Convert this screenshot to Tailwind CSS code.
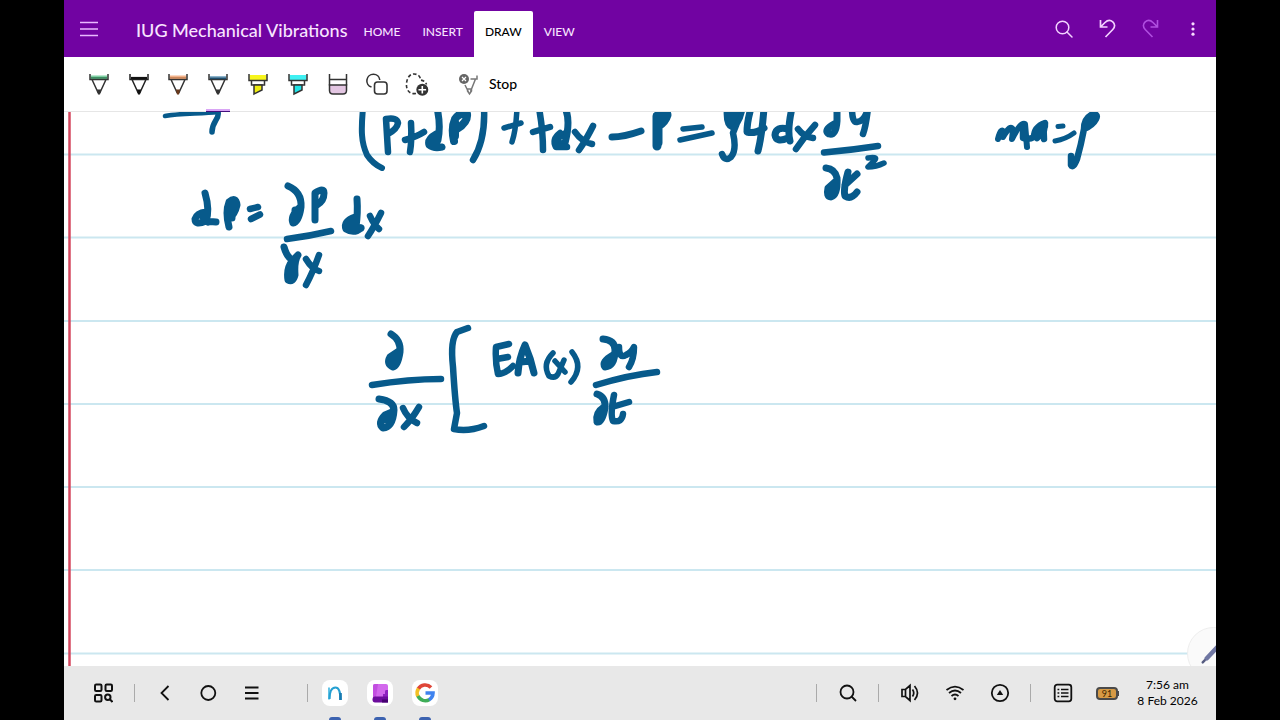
<!DOCTYPE html>
<html lang="en">
<head>
  <meta charset="UTF-8" />
  <meta name="viewport" content="width=device-width, initial-scale=1.0"/>
  <title>IUG Mechanical Vibrations</title>
  <script src="https://cdn.jsdelivr.net/npm/@tailwindcss/browser@4"></script>
</head>
<body class="bg-black font-['Lato','Open_Sans',sans-serif]">

  <div class="mx-[5%] flex h-screen flex-col overflow-hidden bg-white">

    <!-- Title bar -->
    <header class="flex h-[57px] shrink-0 items-stretch bg-[#7103a2] text-[#f8e4ff]">
      <button aria-label="Menu" class="flex w-[50px] items-center justify-center">
        <svg class="size-5" viewBox="0 0 20 20" fill="none" stroke="#e9b9ff" stroke-width="1.6"><path d="M1 3.5h18M1 10h18M1 16.5h18"/></svg>
      </button>
      <h1 class="ml-[22px] flex items-center pt-0.5 text-lg font-medium whitespace-nowrap">IUG Mechanical Vibrations</h1>
      <nav class="ml-[5px] flex items-end text-xs font-medium">
        <button class="h-[46px] px-[11px] pb-1">HOME</button>
        <button class="h-[46px] px-[11px] pb-1">INSERT</button>
        <button class="h-[46px] rounded-t-xs bg-white px-[11px] pb-1 text-black">DRAW</button>
        <button class="h-[46px] px-[11px] pb-1">VIEW</button>
      </nav>
      <div class="mr-[2px] ml-auto flex">
        <button aria-label="Search" class="flex w-[43px] items-center justify-center">
          <svg class="size-5" viewBox="0 0 20 20" fill="none" stroke="#f3d3ff" stroke-width="1.5" stroke-linecap="round"><circle cx="8.500" cy="8.500" r="6.300"/><path d="M13 13l5 5"/></svg>
        </button>
        <button aria-label="Undo" class="flex w-[43px] items-center justify-center">
          <svg class="size-5" viewBox="0 0 20 20" fill="none" stroke="#f3d3ff" stroke-width="1.700"><path d="M3.500 1v7h7M4 7.500L8 3.500C10.500 1 13.500 .8 15.800 2.800C18.200 5 18.200 8 15.800 10.500L8.500 18"/></svg>
        </button>
        <button aria-label="Redo" disabled class="flex w-[43px] items-center justify-center">
          <svg class="size-5" viewBox="0 0 20 20" fill="none" stroke="#b04fe0" stroke-width="1.600"><path d="M17.500 1v7h-7M17 7.500L13 3.500C10.500 1 7.500 .8 5.200 2.800C2.800 5 2.800 8 5.200 10.500L12.500 18"/></svg>
        </button>
        <button aria-label="More options" class="flex w-[43px] items-center justify-center">
          <svg class="size-5" viewBox="0 0 20 20" fill="#f8dcff"><circle cx="10" cy="4.800" r="1.600"/><circle cx="10" cy="10" r="1.600"/><circle cx="10" cy="15.200" r="1.600"/></svg>
        </button>
      </div>
    </header>

    <!-- Drawing tools -->
    <div class="flex h-[55px] shrink-0 border-b border-[#e6e6e6]">
      <div class="ml-[15px] grid w-[358px] shrink-0 grid-cols-9">
        <button aria-label="Green pen" class="flex items-center justify-center">
          <svg class="size-6" viewBox="0 0 24 24" fill="none" stroke="#333" stroke-width="1.500"><path d="M3.500 3.500h17v3h-17z" fill="#7fd0a3" stroke="none"/><path d="M3 2v5.500h18V2M5 7.500l6 13h2l6-13"/><path d="M10 17.500h4l-1 5h-2z" fill="#333" stroke="none"/><path d="M4 6h16" stroke="#2c7a50" stroke-width="1.500"/></svg>
        </button>
        <button aria-label="Black pen" class="flex items-center justify-center">
          <svg class="size-6" viewBox="0 0 24 24" fill="none" stroke="#222" stroke-width="1.500"><path d="M3 2v5.500h18V2M5 7.500l6 13h2l6-13"/><path d="M10 17.500h4l-1 5h-2z" fill="#111" stroke="none"/><path d="M4 6h16" stroke="#111" stroke-width="2.200"/></svg>
        </button>
        <button aria-label="Orange pen" class="flex items-center justify-center">
          <svg class="size-6" viewBox="0 0 24 24" fill="none" stroke="#333" stroke-width="1.500"><path d="M3.500 3.500h17v3h-17z" fill="#f2b28a" stroke="none"/><path d="M3 2v5.500h18V2M5 7.500l6 13h2l6-13"/><path d="M10 17.500h4l-1 5h-2z" fill="#6b3a1c" stroke="none"/><path d="M4 6h16" stroke="#c07a4c" stroke-width="1.500"/></svg>
        </button>
        <button aria-label="Blue pen" aria-pressed="true" class="relative flex items-center justify-center">
          <svg class="size-6" viewBox="0 0 24 24" fill="none" stroke="#333" stroke-width="1.500"><path d="M3.500 4h17v2h-17z" fill="#8cb4cc" stroke="none"/><path d="M3 2v5.500h18V2M5 7.500l6 13h2l6-13"/><path d="M10 17.500h4l-1 5h-2z" fill="#333" stroke="none"/><path d="M4 6.300h16" stroke="#205070" stroke-width="1.600"/></svg>
          <span class="absolute -bottom-px left-2 h-[3px] w-6 border-b border-[#43107c] bg-[#d9a5f5]"></span>
        </button>
        <button aria-label="Yellow highlighter" class="flex items-center justify-center">
          <svg class="size-6" viewBox="0 0 24 24" fill="none" stroke="#333" stroke-width="1.500"><path d="M3.500 3h17v5h-17z" fill="#f7f51c" stroke="none"/><path d="M3 2v6.500h18V2M5.500 8.500V13h13V8.500"/><path d="M8 13v9l8-4v-5z" fill="#f0ee10"/></svg>
        </button>
        <button aria-label="Cyan highlighter" class="flex items-center justify-center">
          <svg class="size-6" viewBox="0 0 24 24" fill="none" stroke="#333" stroke-width="1.500"><path d="M3.500 3h17v5h-17z" fill="#3ff0f2" stroke="none"/><path d="M3 2v6.500h18V2M5.500 8.500V13h13V8.500"/><path d="M8 13v9l8-4v-5z" fill="#1fe4e8"/></svg>
        </button>
        <button aria-label="Eraser" class="flex items-center justify-center">
          <svg class="size-6" viewBox="0 0 24 24" fill="none" stroke="#333" stroke-width="1.500"><path d="M3.500 13h17v5.500q0 3.500-3.500 3.500H7q-3.500 0-3.500-3.500z" fill="#e3c6e2"/><path d="M3.500 2v11.500M20.500 2v11.500M3.500 7.500h17"/></svg>
        </button>
        <button aria-label="Shapes" class="flex items-center justify-center">
          <svg class="size-6" viewBox="0 0 24 24" fill="none" stroke="#333" stroke-width="1.600"><path d="M6.500 15A6.500 6.500 0 1 1 14.800 8"/><rect x="9.500" y="10" width="12.500" height="12" rx="3"/></svg>
        </button>
        <button aria-label="Add lasso" class="flex items-center justify-center">
          <svg class="size-6" viewBox="0 0 24 24" fill="none" stroke="#333" stroke-width="1.600"><path d="M11 21.500C4 22.500 1 17.500 1.500 11.500C2 5.500 5 2 9 2C13 2 15.500 4.500 15.500 8C18 8.500 20.500 9.500 21.500 12.500" stroke-dasharray="3.500 2.200"/><circle cx="17.300" cy="17.800" r="6" fill="#333" stroke="none"/><path d="M17.300 14v7.600M13.500 17.800h7.600" stroke="#fff"/></svg>
        </button>
      </div>
      <button class="ml-5 flex items-center gap-2 text-sm font-medium text-black">
        <svg class="size-6" viewBox="0 0 24 24" fill="none" stroke="#777" stroke-width="1.500"><circle cx="7" cy="7" r="5" fill="#666" stroke="none"/><path d="M5 5l4 4M9 5l-4 4" stroke="#fff" stroke-width="1.200"/><path d="M8 13l3.500 7M13.500 7H20V3.500M18.500 7l-5 12.500M10.500 17h4v2l-2 3-2-3z"/></svg>
        Stop
      </button>
    </div>

    <!-- Ruled page with ink -->
    <main class="relative min-h-0 flex-1 overflow-hidden bg-white">
      <svg role="img" aria-label="Handwritten vibration equations on ruled paper" class="size-full">
        <g transform="translate(-64 -112)" fill="none" stroke-linecap="round" stroke-linejoin="round">
          <g stroke="#cbe7f0" stroke-width="2">
            <path d="M64 154.500h4000M64 237.500h4000M64 321h4000M64 404h4000M64 487h4000M64 570h4000M64 653.500h4000"/>
          </g>
          <path d="M69.500 100V2000" stroke="#d4485f" stroke-width="2.500"/>

          <g stroke="#075a8b" stroke-width="6.500">
            <!-- arrow -->
            <path d="M165 116C180 113 200 114 218 112" stroke-width="4.500"/>
            <path d="M218 112C220 119 212 121 212 132" stroke-width="5.500"/>

            <!-- (P+dP) + fdx - P = rho A dx d2u/dt2 -->
            <path d="M363 108C361 130 361 142 367 155Q373 164 382 168" stroke-width="6"/>
            <path d="M386 119L388 152M386 119Q397 117 398 123Q397 129 388 134"/>
            <path d="M411 123Q412 140 410 152M405 140Q416 137 424 132"/>
            <path d="M437 108Q441 125 438 140M436 134Q427 139 429 145Q434 149 442 147M434 142L438 146" stroke-width="7"/>
            <path d="M454 141Q451 128 455 119Q460 112 467 114Q468 122 457 129M455 136V122" stroke-width="8"/>
            <path d="M484 108C485 128 481 147 473 160"/>
            <path d="M517 108Q516 130 512 142M504 128L521 123" stroke-width="5.500"/>
            <path d="M539 108Q543 130 543 150M533 132L550 127"/>
            <path d="M565 108Q571 120 565 143M564 134L557 138L560 145" stroke-width="7"/>
            <path d="M560 133Q552 139 556 147L567 147"/>
            <path d="M575 132Q582 142 592 144M593 126Q586 140 579 150"/>
            <path d="M612 137Q624 137 641 131" stroke-width="7"/>
            <path d="M657 146V116Q667 111 667 115Q665 122 658 126M658 118V143" stroke-width="9"/>
            <path d="M683 129L702 127M680 140L712 133" stroke-width="5.500"/>
            <path d="M727 110Q726 125 732 127Q739 124 742 110L733 133Q737 150 731 157Q725 162 722 154"/>
            <path d="M731 111V123L737 111" stroke-width="7"/>
            <path d="M751 108Q747 122 747 132Q755 134 764 128M764 108Q762 135 758 151" stroke-width="7"/>
            <path d="M792 108Q787 130 790 141M788 129Q776 126 775 135Q776 143 788 138" stroke-width="7"/>
            <path d="M798 129Q804 137 813 138M815 125Q804 137 796 149"/>
            <path d="M837 108V121Q836 136 829 134Q823 130 834 124" stroke-width="7"/>
            <path d="M852 108Q852 123 857 122Q865 121 868 108Q866 126 863 134"/>
            <path d="M824 152.500Q852 150 878 146"/>
            <path d="M868 158Q880 156 873 162L868 167Q876 167 884 163" stroke-width="5.500"/>
            <path d="M826 168Q835 169 837 178Q838 195 831 197Q826 197 828 188L837 180M832 189V194" stroke-width="7"/>
            <path d="M848 172Q843 190 845 196Q851 200 857 192M845 185L857 174" stroke-width="7"/>

            <!-- ma = rho -->
            <path d="M998 139Q1001 127 1004 132L1003 137Q1011 123 1013 130L1012 139Q1020 122 1025 124L1027 147" stroke-width="6"/>
            <path d="M1023 128V138Q1029 140 1034 137Q1034 127 1045 123Q1046 130 1037 138M1039 128V136M1045 124Q1043 132 1044 139"/>
            <path d="M1058 126.500L1063 126M1055 141Q1066 139 1074 133" stroke-width="5"/>
            <path d="M1084 129Q1084 119 1091 115Q1099 113 1096 119Q1093 125 1084 129Q1081 145 1077 159Q1073 169 1071 165V156M1086 124L1091 119"/>

            <!-- dP = dP/dx dx -->
            <path d="M205 193Q210 210 206 221Q195 226 195 219Q197 213 206 212M204 221L216 222M202 216L208 222" stroke-width="7"/>
            <path d="M229 227Q225 212 229 202Q236 196 237 205Q235 214 229 219M232 203V218" stroke-width="7"/>
            <path d="M250 209L258 207M251 219L260 214.500"/>
            <path d="M288 186Q302 192 301 207Q299 222 293 223Q290 216 300 207M295 210V222" stroke-width="7"/>
            <path d="M315 220V193Q324 187 324 193Q324 201 317 205" stroke-width="7"/>
            <path d="M287 239Q310 236 331 231"/>
            <path d="M357 199Q358 212 356 227L361 228M355 217Q343 221 346 229Q354 234 361 228M351 223V229" stroke-width="7"/>
            <path d="M370 216Q374 225 379 229M381 213Q374 227 368 236"/>
            <path d="M284 247Q287 258 293 260L298 255Q294 261 295 275Q293 283 288 280Q286 268 293 260M291 268V278" stroke-width="7"/>
            <path d="M306 259Q312 269 319 271M319 255Q313 272 306 285"/>

            <!-- d/dx [ EA(x) du/dt -->
            <path d="M391 334Q401 340 400 352Q398 366 393 367Q386 364 390 357L399 351M394 358V365" stroke-width="7"/>
            <path d="M372 385Q409 379 441 379"/>
            <path d="M379 399Q394 401 394 410Q393 427 383 428Q377 423 385 415L392 412M384 420L389 418" stroke-width="7"/>
            <path d="M403 408Q407 418 417 423M419 407Q412 419 404 427"/>
            <path d="M468 328L457 332Q450 340 453 367Q455 400 457 413L454 429Q468 432 484 426"/>
            <path d="M509 344L496 347Q495 361 498 374Q505 374 513 366M497 359L508 357"/>
            <path d="M518 373Q519 358 525 345Q531 359 534 373M521 362L530 361" stroke-width="7"/>
            <path d="M553 353Q542 364 549 376Q555 379 558 374L564 360M555 361L565 372" stroke-width="5.500"/>
            <path d="M572 352Q584 367 571 382" stroke-width="5.500"/>
            <path d="M603 339Q615 340 615 350Q615 366 605 367Q601 362 613 355" stroke-width="7"/>
            <path d="M619 347Q619 359 626 355Q632 352 634 347Q634 359 629 367"/>
            <path d="M596 385Q629 375 657 372"/>
            <path d="M597 394Q606 397 605 408Q602 423 597 422Q595 413 604 407" stroke-width="7"/>
            <path d="M614 395Q610 415 613 421Q622 423 623 414M612 407L629 402"/>
          </g>
        </g>
      </svg>
      <!-- floating pen button, cut off by the page corner -->
      <button aria-label="Pen mode" class="absolute -right-6 -bottom-3.5 size-[53px] rounded-full border border-[#eee] bg-[#fafafa]">
        <svg class="size-full" viewBox="0 0 52 52" fill="none" stroke-linecap="round"><path d="M19 31L36 13" stroke="#7077a3" stroke-width="4.500"/><path d="M15 35l2-2" stroke="#555b80" stroke-width="2.500"/></svg>
      </button>
    </main>

    <!-- System taskbar -->
    <footer class="flex h-[54px] shrink-0 items-center justify-between bg-[#e8e8e8] text-black">
      <div class="flex h-full items-center">
        <button aria-label="App drawer" class="ml-2 flex w-[62px] justify-center">
          <svg class="size-5" viewBox="0 0 20 20" fill="none" stroke="#111" stroke-width="2"><rect x="2" y="1.500" width="6.500" height="6.500" rx="1.200"/><rect x="12.500" y="1.500" width="6.500" height="6.500" rx="1.200"/><rect x="2" y="12" width="6.500" height="6.500" rx="1.200"/><circle cx="14.800" cy="14.300" r="2.700"/><path d="M16.800 16.300l2.700 2.700"/></svg>
        </button>
        <span class="h-[18px] w-px bg-[#aaa]"></span>
        <div class="ml-2 flex">
          <button aria-label="Back" class="flex w-[43px] justify-center">
            <svg class="size-5" viewBox="0 0 20 20" fill="none" stroke="#111" stroke-width="1.800"><path d="M13.500 3L6.500 10l7 7"/></svg>
          </button>
          <button aria-label="Home" class="flex w-[43px] justify-center">
            <svg class="size-5" viewBox="0 0 20 20" fill="none" stroke="#111" stroke-width="1.800"><circle cx="10.300" cy="10" r="7"/></svg>
          </button>
          <button aria-label="Recent apps" class="flex w-[43px] justify-center">
            <svg class="size-5" viewBox="0 0 20 20" fill="none" stroke="#111" stroke-width="1.800"><path d="M4 4.500h13.500M4 10h13.500M4 15.500h13.500"/></svg>
          </button>
        </div>
        <span class="ml-[35px] h-[18px] w-px bg-[#aaa]"></span>
        <div class="ml-1 flex h-full">
          <button aria-label="Nebo" class="relative flex w-[45px] items-center justify-center">
            <svg class="size-[26px] rounded-lg bg-white" viewBox="0 0 26 26" fill="none"><path d="M7 7.500v12" stroke="#3bb4e0" stroke-width="1.600"/><path d="M7.500 19C7.500 12 9.500 7.500 13.500 7.500C17 7.500 18.500 10.500 18.500 20" stroke="#25a0d2" stroke-width="2.200"/><path d="M18.500 13v7" stroke="#1779b0" stroke-width="2.600"/></svg>
            <span class="absolute bottom-0 h-[3px] w-3 rounded-t-sm bg-[#3c62b0]"></span>
          </button>
          <button aria-label="Notebook" class="relative flex w-[45px] items-center justify-center">
            <svg class="size-[26px] rounded-lg bg-white" viewBox="0 0 26 26"><path d="M6 6q0-2 2-2h11q2 0 2 2v15H6z" fill="#d268ec"/><path d="M6 17V6q0-2 2-2h3L9 17z" fill="#c24ee0"/><path d="M21 10h-2q-1 0-1 2v2h-2v3h5z" fill="#8e21c0"/><path d="M8 16.500h13v6H8q-2.500 0-2.500-3t2.500-3z" fill="#6c0c9c"/><path d="M15 19.500h6v3h-6z" fill="#450070"/></svg>
            <span class="absolute bottom-0 h-[3px] w-3 rounded-t-sm bg-[#3c62b0]"></span>
          </button>
          <button aria-label="Google" class="relative flex w-[45px] items-center justify-center">
            <svg class="size-[26px] rounded-lg bg-white" viewBox="0 0 26 26" fill="none" stroke-width="3.600"><path d="M19 7.500A8 8 0 0 0 6.200 9" stroke="#df4638"/><path d="M6.500 8.500A8 8 0 0 0 6 16.500" stroke="#f3bf24"/><path d="M6 16A8 8 0 0 0 17.500 19.500" stroke="#3fae58"/><path d="M17 19.700A8 8 0 0 0 21 13H13.500" stroke="#3f83ef"/></svg>
            <span class="absolute bottom-0 h-[3px] w-3 rounded-t-sm bg-[#3c62b0]"></span>
          </button>
        </div>
      </div>

      <div class="mr-[14px] flex items-center">
        <span class="h-[18px] w-px bg-[#aaa]"></span>
        <button aria-label="Find" class="mx-2 flex w-[45px] justify-center">
          <svg class="size-5" viewBox="0 0 20 20" fill="none" stroke="#111" stroke-width="1.800"><circle cx="9" cy="9" r="6.500"/><path d="M13.500 13.500l4.500 4.500"/></svg>
        </button>
        <span class="h-[18px] w-px bg-[#aaa]"></span>
        <div class="mx-2 flex">
          <button aria-label="Volume" class="flex w-[45px] justify-center">
            <svg class="size-5" viewBox="0 0 20 20" fill="none" stroke="#111" stroke-width="1.700"><path d="M2 6.500h3.500L10 2.500v15L5.500 13.500H2zM5.500 6.500v7M12.500 6.500Q15 10 12.500 13.500M14.500 3Q20.500 10 14.500 17"/></svg>
          </button>
          <button aria-label="Wi-Fi" class="flex w-[45px] justify-center">
            <svg class="size-5" viewBox="0 0 20 20" fill="none" stroke="#111" stroke-width="1.800"><path d="M1.500 7Q10 .2 18.500 7M4 10Q10 5 16 10M6.500 13Q10 10 13.500 13"/><circle cx="10" cy="15.800" r="1.400" fill="#111" stroke="none"/></svg>
          </button>
          <button aria-label="Status" class="flex w-[45px] justify-center">
            <svg class="size-5" viewBox="0 0 20 20" fill="none" stroke="#111" stroke-width="1.800"><circle cx="10" cy="10" r="8.200"/><path d="M10 7l3.200 5H6.800z" fill="#111" stroke="none"/></svg>
          </button>
        </div>
        <span class="h-[18px] w-px bg-[#aaa]"></span>
        <button aria-label="Notifications" class="ml-[9px] flex w-[45px] justify-center">
          <svg class="size-5" viewBox="0 0 20 20" fill="none" stroke="#111" stroke-width="1.800"><rect x="1.700" y="1.700" width="16.600" height="16.600" rx="2.500"/><path d="M8 6.500h7.500M8 10h7.500M8 13.500h7.500M4.500 6.500h1.800M4.500 10h1.800M4.500 13.500h1.800" stroke-width="1.500"/></svg>
        </button>
        <button aria-label="Battery" class="flex w-[45px] items-center justify-center">
          <span class="h-[13px] w-[22px] rounded-sm border-2 border-[#4a4a4a] bg-[#d69a45] text-center text-[9px] leading-[9px] text-[#3b2500]">91</span>
          <span class="h-[5px] w-px bg-[#4a4a4a]"></span>
        </button>
        <button class="ml-[3px] w-[69px] text-center text-xs leading-4 whitespace-nowrap">7:56 am<br>8 Feb 2026</button>
      </div>
    </footer>
  </div>

</body>
</html>
